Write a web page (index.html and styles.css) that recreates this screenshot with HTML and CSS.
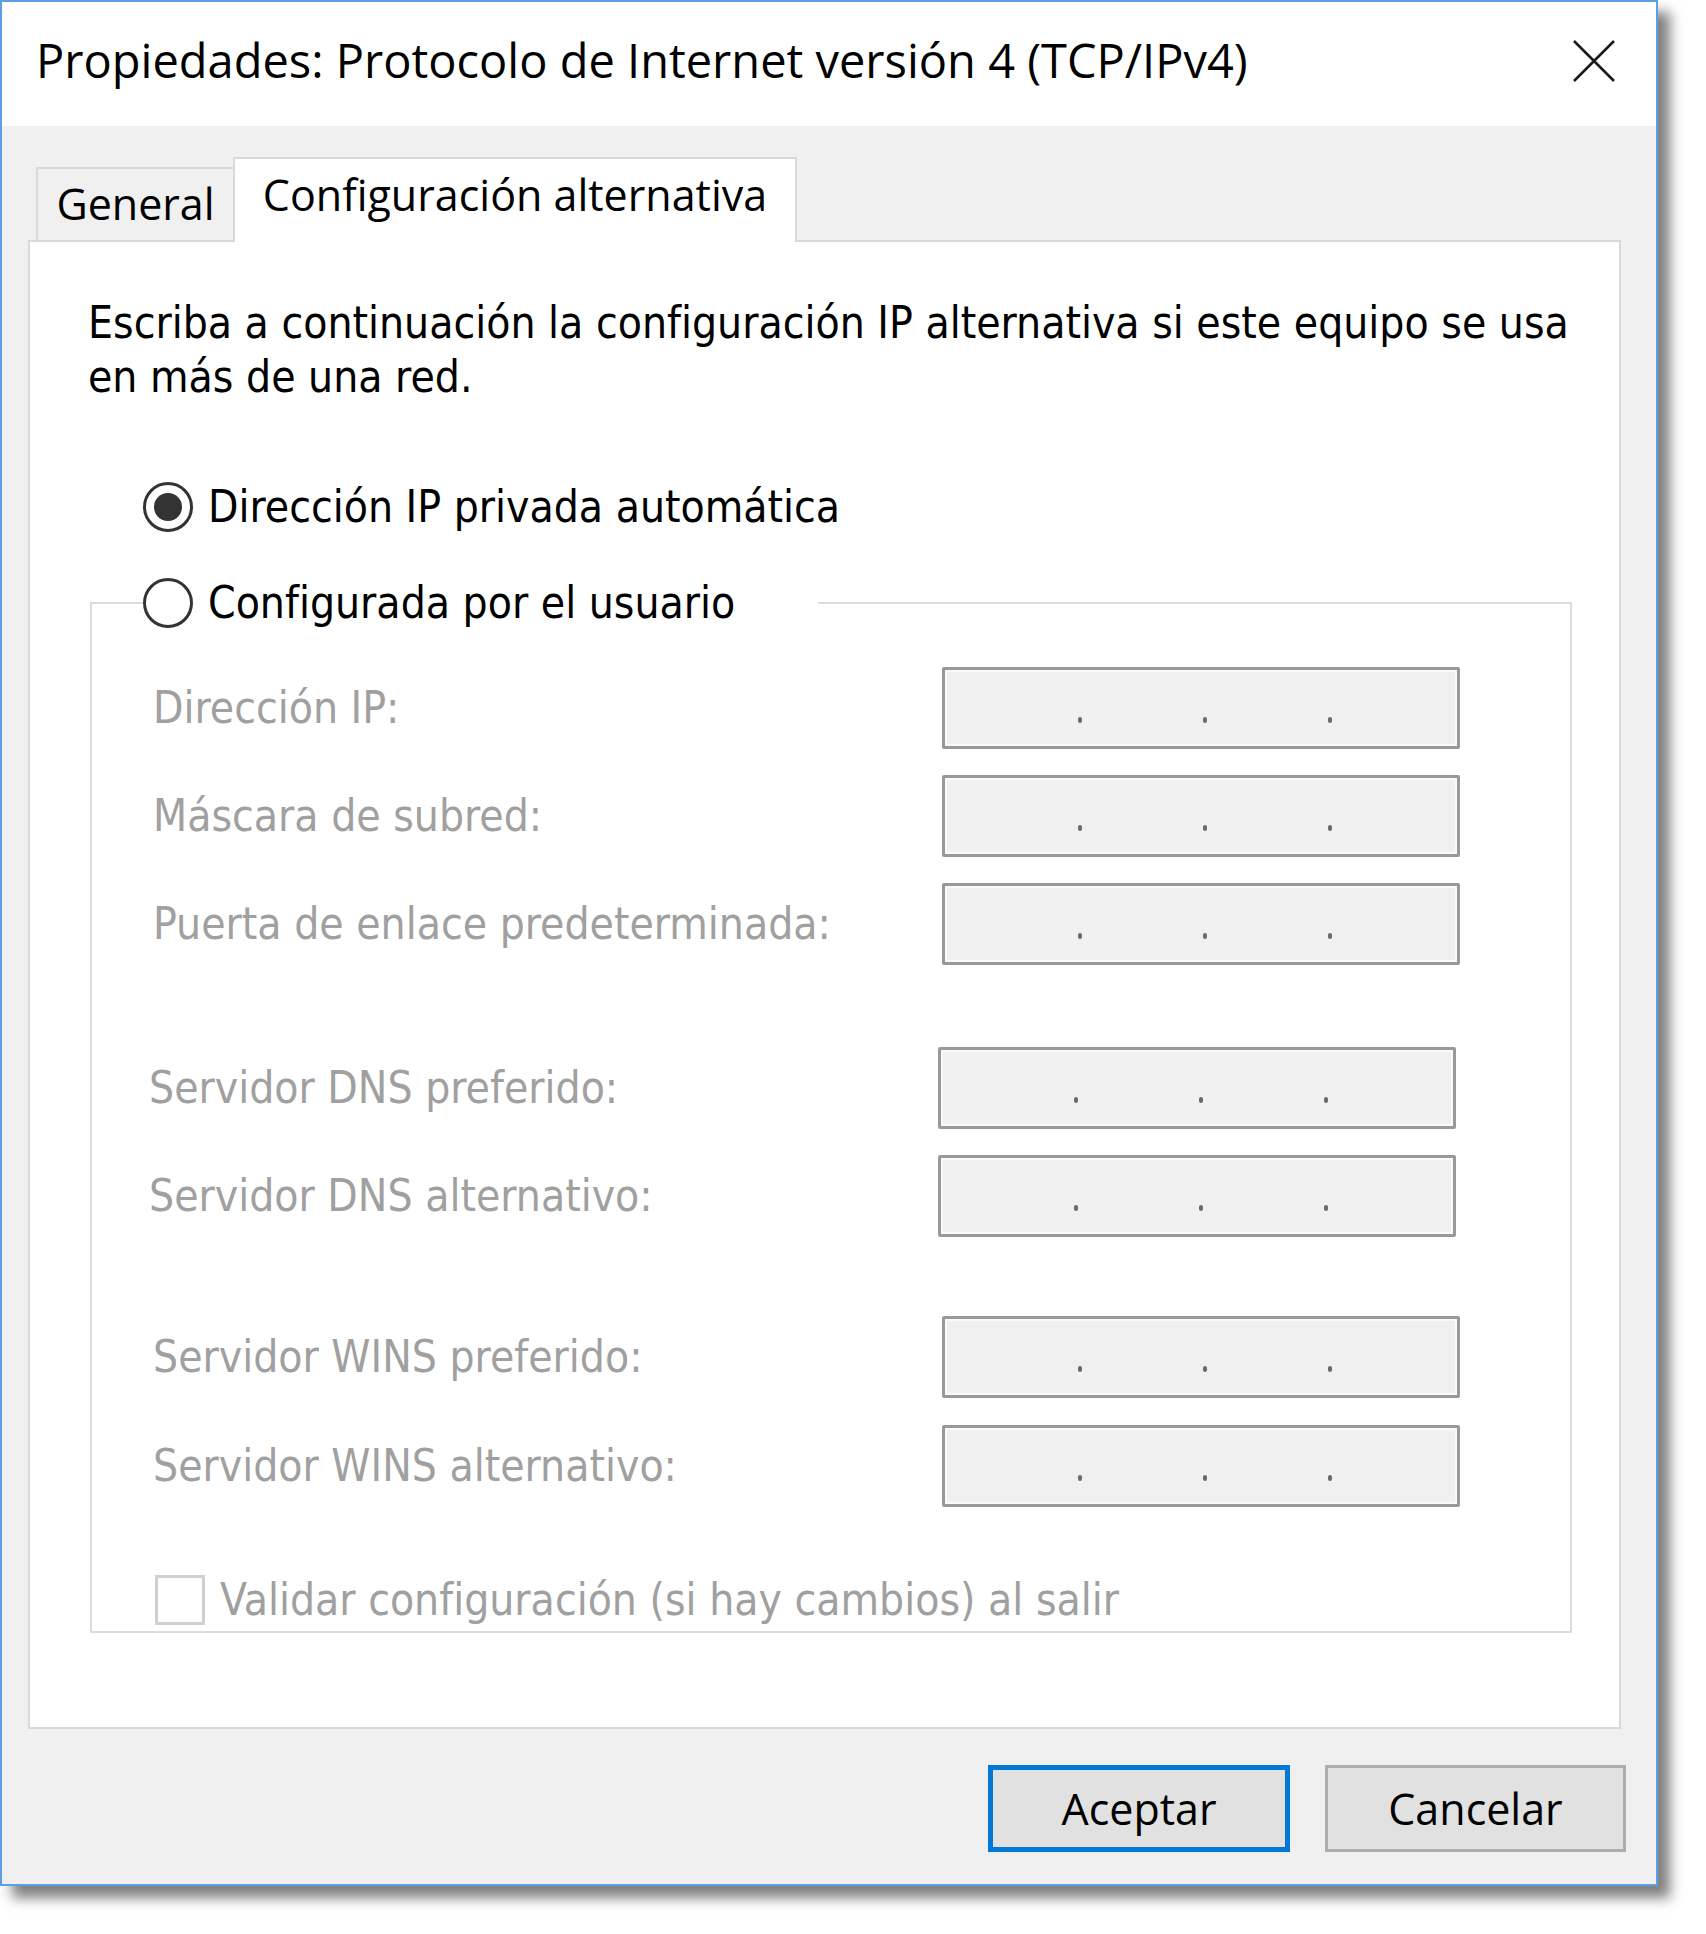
FILE: index.html
```html
<!DOCTYPE html>
<html lang="es">
<head>
<meta charset="utf-8">
<title>Propiedades: Protocolo de Internet versión 4 (TCP/IPv4)</title>
<link rel="stylesheet" href="styles.css">
</head>
<body>
<div class="window">
  <header class="titlebar">
    <h1 class="title">Propiedades: Protocolo de Internet versión 4 (TCP/IPv4)</h1>
    <span class="close" aria-label="Cerrar"><svg viewBox="0 0 44 44" width="44" height="44"><path d="M2 2 L42 42 M42 2 L2 42" stroke="#1a1a1a" stroke-width="2.6" fill="none"/></svg></span>
  </header>
  <div class="client">
    <div class="tabs">
      <div class="tab">General</div>
      <div class="tab active">Configuración alternativa</div>
    </div>
    <div class="panel">
      <p class="desc">Escriba a continuación la configuración IP alternativa si este equipo se usa<br>en más de una red.</p>
      <div class="radio-row first"><span class="radio checked"></span><span>Dirección IP privada automática</span></div>
      <fieldset class="group">
        <legend class="radio-row legend"><span class="radio"></span><span>Configurada por el usuario</span></legend>
        <div class="field"><span class="label">Dirección IP:</span><span class="ipbox"><i></i><i></i><i></i></span></div>
        <div class="field"><span class="label">Máscara de subred:</span><span class="ipbox"><i></i><i></i><i></i></span></div>
        <div class="field"><span class="label">Puerta de enlace predeterminada:</span><span class="ipbox"><i></i><i></i><i></i></span></div>
        <div class="field dns first-dns"><span class="label">Servidor DNS preferido:</span><span class="ipbox"><i></i><i></i><i></i></span></div>
        <div class="field dns"><span class="label">Servidor DNS alternativo:</span><span class="ipbox"><i></i><i></i><i></i></span></div>
        <div class="field first-wins"><span class="label">Servidor WINS preferido:</span><span class="ipbox"><i></i><i></i><i></i></span></div>
        <div class="field wins2"><span class="label">Servidor WINS alternativo:</span><span class="ipbox"><i></i><i></i><i></i></span></div>
        <div class="check-row"><span class="checkbox"></span><span>Validar configuración (si hay cambios) al salir</span></div>
      </fieldset>
    </div>
    <div class="buttons">
      <button class="btn default" type="button">Aceptar</button>
      <button class="btn" type="button">Cancelar</button>
    </div>
  </div>
</div>
</body>
</html>
```

FILE: styles.css
```css
* { box-sizing: border-box; }
html, body { margin: 0; padding: 0; background: #fff; }
body { width: 1706px; height: 1934px; overflow: hidden; }

.window {
  width: 1658px;
  height: 1886px;
  border: 2px solid #5d9fe3;
  background: #f0f0f0;
  box-shadow: 12px 12px 12px rgba(0, 0, 0, 0.5);
  display: flex;
  flex-direction: column;
}

.titlebar {
  height: 124px;
  flex: none;
  background: #fff;
  display: flex;
  align-items: center;
  padding: 0 40px 6px 34px;
}
.title {
  margin: 0;
  flex: 1;
  font: 400 47px/1.36 "Open Sans", "Noto Sans", sans-serif;
  color: #000;
  white-space: nowrap;
}
.close { width: 44px; height: 44px; display: block; flex: none; }
.close svg { display: block; }

.client {
  flex: 1;
  padding: 31px 35px 0 26px;
}

.tabs {
  display: flex;
  align-items: flex-end;
  height: 83px;
  padding-left: 8px;
}
.tab {
  width: 199px;
  height: 73px;
  border: 2px solid #d9d9d9;
  border-bottom: none;
  background: #f0f0f0;
  display: flex;
  align-items: center;
  justify-content: center;
  font: 400 43px/1.36 "Open Sans", "Noto Sans", sans-serif;
  color: #000;
  white-space: nowrap;
}
.tab.active {
  width: 564px;
  height: 85px;
  margin-left: -2px;
  margin-bottom: -2px;
  padding-bottom: 10px;
  background: #fff;
  position: relative;
  z-index: 1;
}

.panel {
  height: 1489px;
  border: 2px solid #d9d9d9;
  background: #fff;
  padding: 54px 47px 0 58px;
  font: 400 44px/54px "DejaVu Sans Condensed", "DejaVu Sans", sans-serif;
  font-stretch: condensed;
  color: #000;
}

.desc { margin: 0; white-space: nowrap; }

.radio-row {
  display: flex;
  align-items: center;
  gap: 15px;
  height: 54px;
  white-space: nowrap;
}
.radio-row.first { margin: 76px 0 0 55px; }
.radio {
  width: 50px;
  height: 50px;
  flex: none;
  border: 3px solid #333;
  border-radius: 50%;
  background: #fff;
  display: flex;
  align-items: center;
  justify-content: center;
}
.radio.checked::after {
  content: "";
  width: 28px;
  height: 28px;
  border-radius: 50%;
  background: #333;
}

.group {
  margin: 42px 0 0 2px;
  padding: 37px 0 4px 0;
  border: 2px solid #dcdcdc;
  min-width: 0;
}
.legend {
  margin-left: 51px;
  padding: 0;
  width: 675px;
  background: #fff;
}

.field {
  display: flex;
  align-items: center;
  height: 82px;
  margin-left: 61px;
  color: #a0a0a0;
  white-space: nowrap;
}
.field + .field { margin-top: 26px; }
.field.dns { margin-left: 57px; }
.field.first-dns { margin-top: 82px; }
.field.first-wins { margin-top: 79px; }
.field.wins2 { margin-top: 27px; }
.label { width: 789px; flex: none; }

.ipbox {
  width: 518px;
  height: 82px;
  flex: none;
  border: 3px solid #999;
  border-radius: 2px;
  background: #f0f0f0;
  box-shadow: inset 0 0 0 2px #fafafa;
  display: flex;
  align-items: flex-end;
  gap: 121px;
  padding: 0 0 23px 133px;
}
.ipbox i {
  display: block;
  width: 4px;
  height: 6px;
  background: #6a6a6a;
  border-radius: 2px;
}

.check-row {
  display: flex;
  align-items: center;
  gap: 15px;
  height: 54px;
  margin: 66px 0 0 63px;
  color: #a0a0a0;
  white-space: nowrap;
}
.checkbox {
  width: 50px;
  height: 50px;
  flex: none;
  border: 3px solid #cfcfcf;
  background: #fff;
}

.buttons {
  display: flex;
  justify-content: flex-end;
  gap: 35px;
  margin: 36px -5px 0 0;
}
.btn {
  width: 301px;
  height: 87px;
  padding: 0;
  border: 3px solid #adadad;
  background: #e1e1e1;
  font: 400 43px/1.2 "Open Sans", "Noto Sans", sans-serif;
  color: #000;
}
.btn.default {
  width: 302px;
  border: 5px solid #0078d7;
}
```
